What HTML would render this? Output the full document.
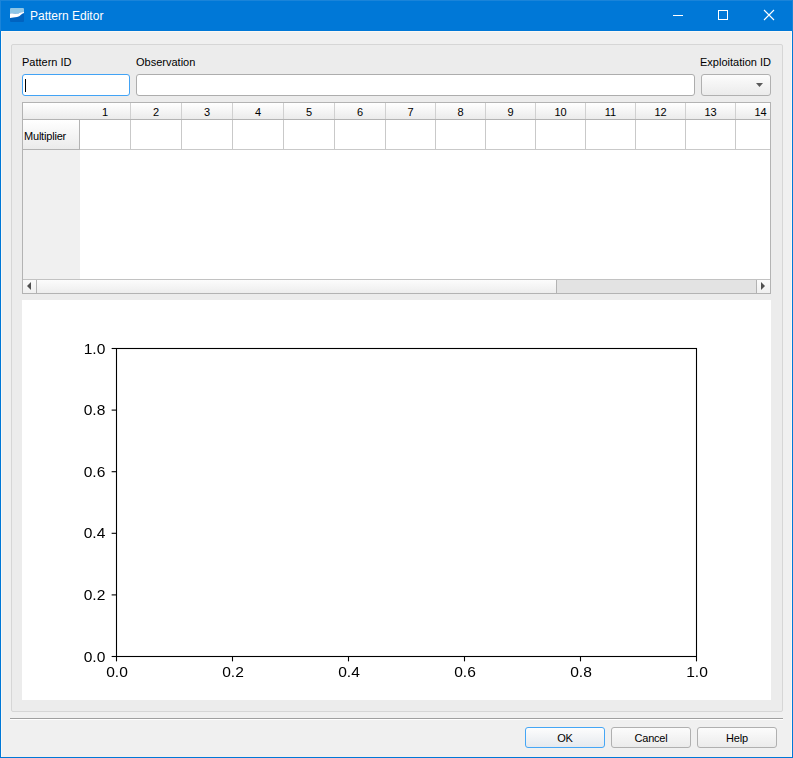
<!DOCTYPE html><html><head><meta charset="utf-8"><style>
*{margin:0;padding:0;box-sizing:border-box}
html,body{width:793px;height:758px;overflow:hidden;background:#0078d7;font-family:"Liberation Sans",sans-serif}
.a{position:absolute}
.t{color:#000;font-size:11px;line-height:13px;white-space:nowrap}
.inp{background:#fff;border:1px solid #adadad;border-radius:3px}
.hdr{background:linear-gradient(#ffffff,#ebebeb)}
.btn{border:1px solid #b0b0b0;border-radius:3px;background:linear-gradient(#fcfcfc,#ebebeb);font-size:11px;text-align:center;line-height:19px;color:#000;padding-top:1px;letter-spacing:-0.2px}
.n{font-size:11px;line-height:13px;text-align:center;color:#000}
.ml{font-size:13.9px;line-height:16px;color:#000;white-space:nowrap;-webkit-font-smoothing:antialiased;will-change:transform}
</style></head><body>
<div class="a" style="left:0;top:0;width:793px;height:31px;background:#0078d7">
<svg class="a" style="left:10px;top:8px" width="14" height="14" viewBox="0 0 14 14">
<rect x="0" y="0" width="14" height="14" rx="1" fill="#0063c0"/>
<path d="M0 1 Q0 0 1 0 H13 Q14 0 14 1 V3.9 L11 4.3 Q9.5 5 8 5.5 Q6.5 5.9 5.5 5.8 Q3 5.0 0 5.5 Z" fill="#8fc6e6"/>
<path d="M0 5.5 Q2.5 5.0 5.5 5.8 Q8 5.9 11 4.3 L14 3.9 V5 Q12 5.5 11 6.8 Q9.5 8.6 7 8.9 Q3 9.2 0 10 Z" fill="#ffffff"/>
</svg>
<div class="a" style="left:30px;top:9px;font-size:12px;line-height:15px;color:#fff;white-space:nowrap">Pattern Editor</div>
<div class="a" style="left:673px;top:15px;width:10px;height:1px;background:#fff"></div>
<div class="a" style="left:718px;top:10px;width:10px;height:10px;border:1px solid #fff"></div>
<svg class="a" style="left:763px;top:9px" width="12" height="12" viewBox="0 0 12 12"><path d="M1 1 L11 11 M11 1 L1 11" stroke="#fff" stroke-width="1.1"/></svg>
<div class="a" style="left:0;top:0;width:793px;height:1px;background:#1a84d9"></div>
<div class="a" style="left:0;top:0;width:1px;height:31px;background:#1a84d9"></div>
<div class="a" style="left:792px;top:0;width:1px;height:31px;background:#1a84d9"></div>
</div>
<div class="a" style="left:1px;top:31px;width:791px;height:726px;background:#f0f0f0;border-left:1px solid #fbf8f4;border-top:1px solid #fbf8f4;border-right:1px solid #fbf8f4"></div>
<div class="a" style="left:11px;top:44px;width:772px;height:668px;border:1px solid #d6d6d6;border-radius:2px;background:#ececec"></div>
<div class="a t" style="left:22px;top:56px">Pattern ID</div>
<div class="a t" style="left:136px;top:56px">Observation</div>
<div class="a t" style="left:700px;top:56px">Exploitation ID</div>
<div class="a inp" style="left:22px;top:74px;width:108px;height:22px;border-color:#42a3f5"></div>
<div class="a" style="left:25px;top:79px;width:1px;height:13px;background:#000"></div>
<div class="a inp" style="left:136px;top:74px;width:559px;height:22px"></div>
<div class="a btn" style="left:701px;top:74px;width:70px;height:22px"></div>
<svg class="a" style="left:756px;top:83px" width="8" height="4" viewBox="0 0 8 4"><path d="M0 0 H7 L3.5 4 Z" fill="#5a5a5a"/></svg>
<div class="a" style="left:22px;top:102px;width:749px;height:192px;border:1px solid #b3b3b3;background:#fff"></div>
<div class="a hdr" style="left:23px;top:103px;width:747px;height:16px"></div>
<div class="a" style="left:23px;top:119px;width:747px;height:1px;background:#b3b3b3"></div>
<div class="a hdr" style="left:23px;top:120px;width:56px;height:29px"></div>
<div class="a" style="left:23px;top:149px;width:57px;height:1px;background:#b3b3b3"></div>
<div class="a" style="left:79px;top:120px;width:1px;height:29px;background:#b3b3b3"></div>
<div class="a" style="left:23px;top:150px;width:57px;height:129px;background:#f0f0f0"></div>
<div class="a t" style="left:24px;top:130px;letter-spacing:-0.2px">Multiplier</div>
<div class="a" style="left:80px;top:149px;width:690px;height:1px;background:#c9c9c9"></div>
<div class="a" style="left:130px;top:103px;width:1px;height:16px;background:#d0d0d0"></div>
<div class="a" style="left:130px;top:120px;width:1px;height:29px;background:#c9c9c9"></div>
<div class="a" style="left:181px;top:103px;width:1px;height:16px;background:#d0d0d0"></div>
<div class="a" style="left:181px;top:120px;width:1px;height:29px;background:#c9c9c9"></div>
<div class="a" style="left:232px;top:103px;width:1px;height:16px;background:#d0d0d0"></div>
<div class="a" style="left:232px;top:120px;width:1px;height:29px;background:#c9c9c9"></div>
<div class="a" style="left:283px;top:103px;width:1px;height:16px;background:#d0d0d0"></div>
<div class="a" style="left:283px;top:120px;width:1px;height:29px;background:#c9c9c9"></div>
<div class="a" style="left:334px;top:103px;width:1px;height:16px;background:#d0d0d0"></div>
<div class="a" style="left:334px;top:120px;width:1px;height:29px;background:#c9c9c9"></div>
<div class="a" style="left:385px;top:103px;width:1px;height:16px;background:#d0d0d0"></div>
<div class="a" style="left:385px;top:120px;width:1px;height:29px;background:#c9c9c9"></div>
<div class="a" style="left:435px;top:103px;width:1px;height:16px;background:#d0d0d0"></div>
<div class="a" style="left:435px;top:120px;width:1px;height:29px;background:#c9c9c9"></div>
<div class="a" style="left:485px;top:103px;width:1px;height:16px;background:#d0d0d0"></div>
<div class="a" style="left:485px;top:120px;width:1px;height:29px;background:#c9c9c9"></div>
<div class="a" style="left:535px;top:103px;width:1px;height:16px;background:#d0d0d0"></div>
<div class="a" style="left:535px;top:120px;width:1px;height:29px;background:#c9c9c9"></div>
<div class="a" style="left:585px;top:103px;width:1px;height:16px;background:#d0d0d0"></div>
<div class="a" style="left:585px;top:120px;width:1px;height:29px;background:#c9c9c9"></div>
<div class="a" style="left:635px;top:103px;width:1px;height:16px;background:#d0d0d0"></div>
<div class="a" style="left:635px;top:120px;width:1px;height:29px;background:#c9c9c9"></div>
<div class="a" style="left:685px;top:103px;width:1px;height:16px;background:#d0d0d0"></div>
<div class="a" style="left:685px;top:120px;width:1px;height:29px;background:#c9c9c9"></div>
<div class="a" style="left:735px;top:103px;width:1px;height:16px;background:#d0d0d0"></div>
<div class="a" style="left:735px;top:120px;width:1px;height:29px;background:#c9c9c9"></div>
<div class="a n" style="left:80px;top:106px;width:50px">1</div>
<div class="a n" style="left:131px;top:106px;width:50px">2</div>
<div class="a n" style="left:182px;top:106px;width:50px">3</div>
<div class="a n" style="left:233px;top:106px;width:50px">4</div>
<div class="a n" style="left:284px;top:106px;width:50px">5</div>
<div class="a n" style="left:335px;top:106px;width:50px">6</div>
<div class="a n" style="left:386px;top:106px;width:49px">7</div>
<div class="a n" style="left:436px;top:106px;width:49px">8</div>
<div class="a n" style="left:486px;top:106px;width:49px">9</div>
<div class="a n" style="left:536px;top:106px;width:49px">10</div>
<div class="a n" style="left:586px;top:106px;width:49px">11</div>
<div class="a n" style="left:636px;top:106px;width:49px">12</div>
<div class="a n" style="left:686px;top:106px;width:49px">13</div>
<div class="a n" style="left:736px;top:106px;width:49px">14</div>
<div class="a" style="left:23px;top:279px;width:747px;height:1px;background:#c2c2c2"></div>
<div class="a" style="left:23px;top:280px;width:13px;height:13px;background:linear-gradient(#fbfbfb,#f0f0f0)"></div>
<div class="a" style="left:36px;top:280px;width:1px;height:13px;background:#b3b3b3"></div>
<div class="a" style="left:37px;top:280px;width:519px;height:13px;background:linear-gradient(#fcfcfc,#ededed)"></div>
<div class="a" style="left:556px;top:280px;width:1px;height:13px;background:#b3b3b3"></div>
<div class="a" style="left:557px;top:280px;width:199px;height:13px;background:#e3e3e3"></div>
<div class="a" style="left:756px;top:280px;width:1px;height:13px;background:#b3b3b3"></div>
<div class="a" style="left:757px;top:280px;width:13px;height:13px;background:linear-gradient(#fbfbfb,#f0f0f0)"></div>
<svg class="a" style="left:26px;top:282px" width="6" height="9" viewBox="0 0 6 9"><path d="M5 0 V8 L1 4 Z" fill="#505050"/></svg>
<svg class="a" style="left:760px;top:282px" width="6" height="9" viewBox="0 0 6 9"><path d="M1 0 V8 L5 4 Z" fill="#505050"/></svg>
<div class="a" style="left:22px;top:300px;width:749px;height:400px;background:#fff"></div>
<svg class="a" style="left:0;top:0" width="793" height="758" viewBox="0 0 793 758"><rect x="116.5" y="348.5" width="580.0" height="308.0" fill="none" stroke="#000" stroke-width="1.1"/><line x1="111.64" y1="656.5" x2="116.5" y2="656.5" stroke="#000" stroke-width="1.1"/><line x1="116.5" y1="656.5" x2="116.5" y2="661.36" stroke="#000" stroke-width="1.1"/><line x1="111.64" y1="594.9" x2="116.5" y2="594.9" stroke="#000" stroke-width="1.1"/><line x1="232.5" y1="656.5" x2="232.5" y2="661.36" stroke="#000" stroke-width="1.1"/><line x1="111.64" y1="533.3" x2="116.5" y2="533.3" stroke="#000" stroke-width="1.1"/><line x1="348.5" y1="656.5" x2="348.5" y2="661.36" stroke="#000" stroke-width="1.1"/><line x1="111.64" y1="471.7" x2="116.5" y2="471.7" stroke="#000" stroke-width="1.1"/><line x1="464.5" y1="656.5" x2="464.5" y2="661.36" stroke="#000" stroke-width="1.1"/><line x1="111.64" y1="410.1" x2="116.5" y2="410.1" stroke="#000" stroke-width="1.1"/><line x1="580.5" y1="656.5" x2="580.5" y2="661.36" stroke="#000" stroke-width="1.1"/><line x1="111.64" y1="348.5" x2="116.5" y2="348.5" stroke="#000" stroke-width="1.1"/><line x1="696.5" y1="656.5" x2="696.5" y2="661.36" stroke="#000" stroke-width="1.1"/></svg>
<div class="a ml" style="right:688px;top:648.5px;transform:scaleX(1.12);transform-origin:100% 50%">0.0</div>
<div class="a ml" style="left:86.5px;width:60px;text-align:center;top:663.5px;transform:scaleX(1.12)">0.0</div>
<div class="a ml" style="right:688px;top:586.9px;transform:scaleX(1.12);transform-origin:100% 50%">0.2</div>
<div class="a ml" style="left:202.5px;width:60px;text-align:center;top:663.5px;transform:scaleX(1.12)">0.2</div>
<div class="a ml" style="right:688px;top:525.3px;transform:scaleX(1.12);transform-origin:100% 50%">0.4</div>
<div class="a ml" style="left:318.5px;width:60px;text-align:center;top:663.5px;transform:scaleX(1.12)">0.4</div>
<div class="a ml" style="right:688px;top:463.7px;transform:scaleX(1.12);transform-origin:100% 50%">0.6</div>
<div class="a ml" style="left:434.5px;width:60px;text-align:center;top:663.5px;transform:scaleX(1.12)">0.6</div>
<div class="a ml" style="right:688px;top:402.1px;transform:scaleX(1.12);transform-origin:100% 50%">0.8</div>
<div class="a ml" style="left:550.5px;width:60px;text-align:center;top:663.5px;transform:scaleX(1.12)">0.8</div>
<div class="a ml" style="right:688px;top:340.5px;transform:scaleX(1.12);transform-origin:100% 50%">1.0</div>
<div class="a ml" style="left:666.5px;width:60px;text-align:center;top:663.5px;transform:scaleX(1.12)">1.0</div>
<div class="a" style="left:10px;top:718px;width:773px;height:1px;background:#a0a0a0"></div>
<div class="a" style="left:10px;top:719px;width:773px;height:1px;background:#fff"></div>
<div class="a btn" style="left:525px;top:727px;width:80px;height:21px;border-color:#45a6f5;background:linear-gradient(#fdfdfd,#e5e9ee)">OK</div>
<div class="a btn" style="left:611px;top:727px;width:80px;height:21px">Cancel</div>
<div class="a btn" style="left:697px;top:727px;width:80px;height:21px">Help</div>
</body></html>
